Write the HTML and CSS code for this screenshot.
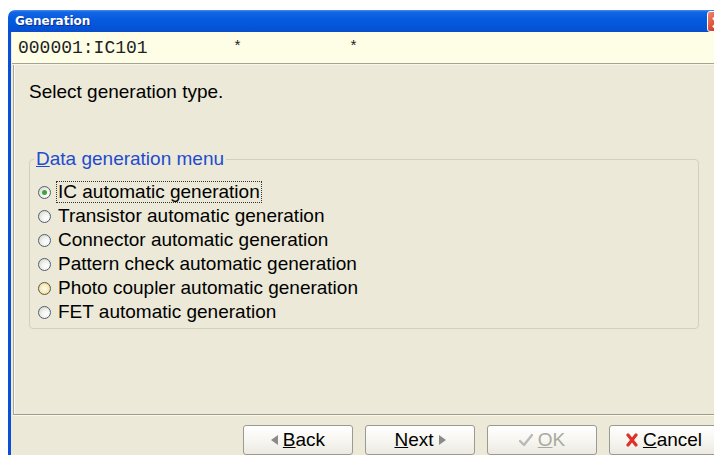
FILE: index.html
```html
<!DOCTYPE html>
<html lang="en">
<head>
<meta charset="utf-8">
<title>Generation</title>
<link rel="stylesheet" href="styles.css">
</head>
<body>
<div class="window">
  <div class="titlebar">
    <span class="title">Generation</span>
    <span class="close-btn"><svg viewBox="0 0 21 21" width="21" height="21"><path d="M6 6 L15 15 M15 6 L6 15" stroke="#fff" stroke-width="2.2" stroke-linecap="round"/></svg></span>
  </div>
  <div class="frame">
    <div class="infobar"><span class="record">000001:IC101</span><span class="mark first">*</span><span class="mark second">*</span></div>
    <div class="panel">
      <p class="prompt">Select generation type.</p>
      <fieldset class="group">
        <legend><u>D</u>ata generation menu</legend>
        <ul class="options">
          <li><span class="radio checked"></span><span class="label focused">IC automatic generation</span></li>
          <li><span class="radio"></span><span class="label">Transistor automatic generation</span></li>
          <li><span class="radio"></span><span class="label">Connector automatic generation</span></li>
          <li><span class="radio"></span><span class="label">Pattern check automatic generation</span></li>
          <li><span class="radio hover"></span><span class="label">Photo coupler automatic generation</span></li>
          <li><span class="radio"></span><span class="label">FET automatic generation</span></li>
        </ul>
      </fieldset>
    </div>
    <div class="footer">
      <button class="btn"><svg class="ico" viewBox="0 0 7 10" width="7" height="10"><path d="M7 0 L0 5 L7 10 Z" fill="#8a8a8a"/></svg><span><u>B</u>ack</span></button>
      <button class="btn"><span><u>N</u>ext</span><svg class="ico" viewBox="0 0 7 10" width="7" height="10"><path d="M0 0 L7 5 L0 10 Z" fill="#8a8a8a"/></svg></button>
      <button class="btn disabled"><svg class="ico" viewBox="0 0 14 12" width="14" height="12"><path d="M1 7 L5 11 L13 1" fill="none" stroke="#b9b9b9" stroke-width="2.4" stroke-linecap="round" stroke-linejoin="round"/></svg><span><u>O</u>K</span></button>
      <button class="btn"><svg class="ico" viewBox="0 0 12 14" width="12" height="14"><path d="M2 2 L10 12 M10 2 L2 12" stroke="#e0302a" stroke-width="3.2" stroke-linecap="round"/></svg><span><u>C</u>ancel</span></button>
    </div>
  </div>
</div>
</body>
</html>
```

FILE: styles.css
```css
html, body {
  margin: 0;
  padding: 0;
  background: #ffffff;
}

body {
  width: 714px;
  height: 457px;
  overflow: hidden;
  font-family: "Liberation Sans", Arial, sans-serif;
  font-size: 19px;
  color: #000;
}

.window {
  margin: 10px 0 0 8px;
  width: 720px;
}

.titlebar {
  height: 22px;
  display: flex;
  align-items: center;
  justify-content: space-between;
  border-radius: 7px 7px 0 0;
  background: linear-gradient(#4a8ff4 0, #1466e6 2px, #065bde 40%, #0454d8 80%, #0a4dcc 100%);
}

.title {
  font-family: "DejaVu Sans", Verdana, sans-serif;
  font-weight: bold;
  font-size: 12px;
  color: #ffffff;
  padding-left: 7px;
  text-shadow: 1px 1px 0 #0a2f8a;
}

.close-btn {
  width: 21px;
  height: 21px;
  box-sizing: border-box;
  border: 1px solid #ffffff;
  border-radius: 3px;
  background: linear-gradient(135deg, #f08a70, #d8402a 60%, #c03018);
  display: flex;
}

.frame {
  border-left: 3px solid #0a4fd6;
  background: #ece9d8;
}

/* record id strip with two field markers */
.infobar {
  height: 31px;
  display: flex;
  align-items: center;
  margin-left: 1px;
  padding-left: 6px;
  background: #fefee6;
  font-family: "Liberation Mono", "Courier New", monospace;
  font-size: 18px;
  color: #222;
  border-bottom: 1px solid #a5a496;
  box-shadow: 0 1px 0 #f6f5ee;
}

.mark {
  font-size: 15px;
  width: 10px;
  text-align: center;
}

.mark.first {
  margin-left: 85px;
}

.mark.second {
  margin-left: 106px;
}

.panel {
  margin: 1px 0 0 2px;
  height: 350px;
  border-left: 1px solid #aca899;
  border-bottom: 1px solid #9e9b8a;
  box-shadow: 0 1px 0 #f8f7f0, inset 1px 0 0 #f8f7f0;
  padding-left: 15px;
  box-sizing: border-box;
  padding-top: 17px;
}

.prompt {
  margin: 0;
  line-height: 20px;
}

.group {
  margin: 47px 0 0 0;
  width: 670px;
  box-sizing: border-box;
  border: 1px solid #d3d0bf;
  border-radius: 4px;
  padding: 0 0 4px 8px;
}

.group legend {
  color: #1f4bd2;
  line-height: 20px;
  padding: 0 2px;
  margin-left: -4px;
}

.options {
  list-style: none;
  margin: 11px 0 0 0;
  padding: 0;
}

.options li {
  height: 24px;
  display: flex;
  align-items: center;
}

.radio {
  width: 13px;
  height: 13px;
  box-sizing: border-box;
  border-radius: 50%;
  border: 1px solid #4f5f70;
  background: radial-gradient(circle at 65% 65%, #ffffff 0, #f2f2ee 40%, #cfcfc6 100%);
  margin-right: 5px;
  display: flex;
  align-items: center;
  justify-content: center;
}

.radio.checked::after {
  content: "";
  width: 5px;
  height: 5px;
  border-radius: 50%;
  background: #3aa53a;
}

.radio.hover {
  background: radial-gradient(circle, #fbfbf2 0, #f7e9b8 55%, #e5b94e 100%);
  border-color: #5c5a48;
}

.label {
  padding: 0 1px;
  line-height: 20px;
  border: 1px dotted transparent;
}

.label.focused {
  border-color: #333;
}

.footer {
  height: 40px;
  padding: 10px 0 0 232px;
  box-sizing: border-box;
  display: flex;
  gap: 12px;
}

.btn {
  width: 110px;
  height: 30px;
  flex: none;
  box-sizing: border-box;
  border: 1px solid #9c9a90;
  border-radius: 3px;
  background: linear-gradient(#ffffff 0, #f7f6f1 50%, #ebe9e1 100%);
  font-family: "Liberation Sans", Arial, sans-serif;
  font-size: 19px;
  color: #000;
  display: flex;
  align-items: center;
  justify-content: center;
  gap: 5px;
  padding: 0;
}

.btn.disabled {
  color: #aaa99f;
}

.ico {
  flex: none;
}
```
